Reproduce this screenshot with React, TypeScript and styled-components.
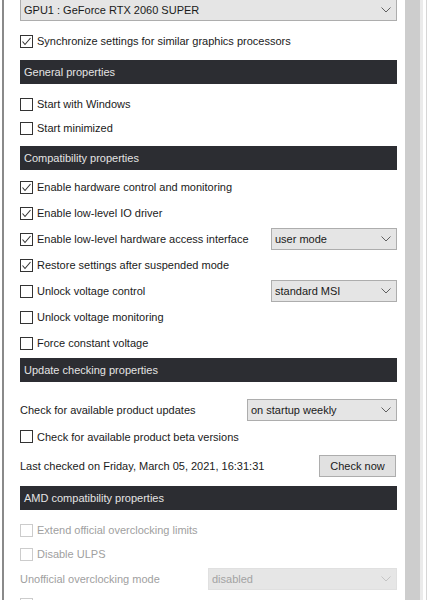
import React from "react";
import styled, { createGlobalStyle } from "styled-components";

const Global = createGlobalStyle`
  html, body { margin: 0; padding: 0; background: #ffffff; }
  body { font-family: "Liberation Sans", Arial, sans-serif; font-size: 11px; color: #1a1a1a; }
`;

const Window = styled.div`
  display: flex;
  height: 600px;
  overflow: hidden;
  background: #ffffff;
`;

const LeftEdge = styled.div`
  width: 2px;
  margin-left: 2px;
  background: #8a8a8a;
  flex: none;
`;

const Content = styled.div`
  width: 377px;
  margin-left: 16px;
  display: flex;
  flex-direction: column;
  flex: none;
`;

const ScrollArea = styled.div`
  margin-left: 8px;
  display: flex;
  flex: none;
`;

const Thumb = styled.div`
  width: 15px;
  background: #cdcdcd;
`;

const Strip = styled.div<{ $w: number; $c: string }>`
  width: ${(p) => p.$w}px;
  background: ${(p) => p.$c};
`;

const ComboBox = styled.div<{ $w?: number; $disabled?: boolean; $mt?: number }>`
  box-sizing: border-box;
  height: 22px;
  width: ${(p) => (p.$w ? `${p.$w}px` : "100%")};
  margin-top: ${(p) => p.$mt ?? 0}px;
  background: ${(p) => (p.$disabled ? "#e6e6e6" : "#e5e5e5")};
  border: 1px solid ${(p) => (p.$disabled ? "#e0e0e0" : "#adadad")};
  display: flex;
  align-items: center;
  justify-content: space-between;
  padding: 0 5px 0 3px;
  color: ${(p) => (p.$disabled ? "#a3a3a3" : "#1a1a1a")};
  flex: none;
`;

const ComboText = styled.span`
  white-space: nowrap;
`;

const Chevron = ({ disabled }: { disabled?: boolean }) => (
  <svg width="10" height="6" viewBox="0 0 10 6">
    <polyline
      points="0.5,0.5 5,5 9.5,0.5"
      fill="none"
      stroke={disabled ? "#c4c4c4" : "#606060"}
      strokeWidth="1"
    />
  </svg>
);

const Row = styled.div<{ $h: number; $mt?: number }>`
  height: ${(p) => p.$h}px;
  margin-top: ${(p) => p.$mt ?? 0}px;
  display: flex;
  align-items: center;
  justify-content: space-between;
  flex: none;
`;

const CheckLabel = styled.label<{ $disabled?: boolean }>`
  display: flex;
  align-items: center;
  gap: 4px;
  color: ${(p) => (p.$disabled ? "#a0a0a0" : "#1a1a1a")};
  white-space: nowrap;
`;

const Box = styled.span<{ $disabled?: boolean }>`
  box-sizing: border-box;
  width: 13px;
  height: 13px;
  border: 1px solid ${(p) => (p.$disabled ? "#cccccc" : "#333333")};
  background: #ffffff;
  display: flex;
  align-items: center;
  justify-content: center;
  flex: none;
`;

const Text = styled.span<{ $disabled?: boolean }>`
  color: ${(p) => (p.$disabled ? "#a0a0a0" : "#1a1a1a")};
  white-space: nowrap;
`;

const Header = styled.div<{ $mt: number }>`
  box-sizing: border-box;
  height: 24px;
  margin-top: ${(p) => p.$mt}px;
  background: #2c2d32;
  color: #e4e4e4;
  display: flex;
  align-items: center;
  padding-left: 4px;
  flex: none;
`;

const Button = styled.div`
  box-sizing: border-box;
  width: 77px;
  height: 22px;
  background: #e1e1e1;
  border: 1px solid #adadad;
  display: flex;
  align-items: center;
  justify-content: center;
  margin-right: 1px;
`;

const Check = ({
  label,
  checked,
  disabled,
}: {
  label?: string;
  checked?: boolean;
  disabled?: boolean;
}) => (
  <CheckLabel $disabled={disabled}>
    <Box $disabled={disabled}>
      {checked && (
        <svg width="11" height="11" viewBox="0 0 11 11">
          <polyline
            points="1.5,5.5 4,8.5 9.5,2"
            fill="none"
            stroke="#333333"
            strokeWidth="1.1"
          />
        </svg>
      )}
    </Box>
    {label}
  </CheckLabel>
);

const Combo = ({
  value,
  w,
  disabled,
  mt,
}: {
  value: string;
  w?: number;
  disabled?: boolean;
  mt?: number;
}) => (
  <ComboBox $w={w} $disabled={disabled} $mt={mt}>
    <ComboText>{value}</ComboText>
    <Chevron disabled={disabled} />
  </ComboBox>
);

export default function App() {
  return (
    <>
      <Global />
      <Window>
        <LeftEdge />
        <Content>
          <Combo value="GPU1 : GeForce RTX 2060 SUPER" mt={-1} />
          <Row $h={24} $mt={8}>
            <Check label="Synchronize settings for similar graphics processors" checked />
          </Row>
          <Header $mt={7}>General properties</Header>
          <Row $h={24} $mt={8}>
            <Check label="Start with Windows" />
          </Row>
          <Row $h={24}>
            <Check label="Start minimized" />
          </Row>
          <Header $mt={6}>Compatibility properties</Header>
          <Row $h={26} $mt={4}>
            <Check label="Enable hardware control and monitoring" checked />
          </Row>
          <Row $h={26}>
            <Check label="Enable low-level IO driver" checked />
          </Row>
          <Row $h={26}>
            <Check label="Enable low-level hardware access interface" checked />
            <Combo value="user mode" w={126} />
          </Row>
          <Row $h={26}>
            <Check label="Restore settings after suspended mode" checked />
          </Row>
          <Row $h={26}>
            <Check label="Unlock voltage control" />
            <Combo value="standard MSI" w={126} />
          </Row>
          <Row $h={26}>
            <Check label="Unlock voltage monitoring" />
          </Row>
          <Row $h={26}>
            <Check label="Force constant voltage" />
          </Row>
          <Header $mt={2}>Update checking properties</Header>
          <Row $h={27} $mt={14}>
            <Text>Check for available product updates</Text>
            <Combo value="on startup weekly" w={150} />
          </Row>
          <Row $h={27}>
            <Check label="Check for available product beta versions" />
          </Row>
          <Row $h={27} $mt={2}>
            <Text>Last checked on Friday, March 05, 2021, 16:31:31</Text>
            <Button>Check now</Button>
          </Row>
          <Header $mt={7}>AMD compatibility properties</Header>
          <Row $h={24} $mt={8}>
            <Check label="Extend official overclocking limits" disabled />
          </Row>
          <Row $h={24}>
            <Check label="Disable ULPS" disabled />
          </Row>
          <Row $h={26}>
            <Text $disabled>Unofficial overclocking mode</Text>
            <Combo value="disabled" w={189} disabled />
          </Row>
          <Row $h={24}>
            <Check disabled />
          </Row>
        </Content>
        <ScrollArea>
          <Thumb />
          <Strip $w={3} $c="#ebebeb" />
          <Strip $w={3} $c="#ffffff" />
          <Strip $w={1} $c="#d6d6d6" />
          <Strip $w={7} $c="#ffffff" />
        </ScrollArea>
      </Window>
    </>
  );
}
